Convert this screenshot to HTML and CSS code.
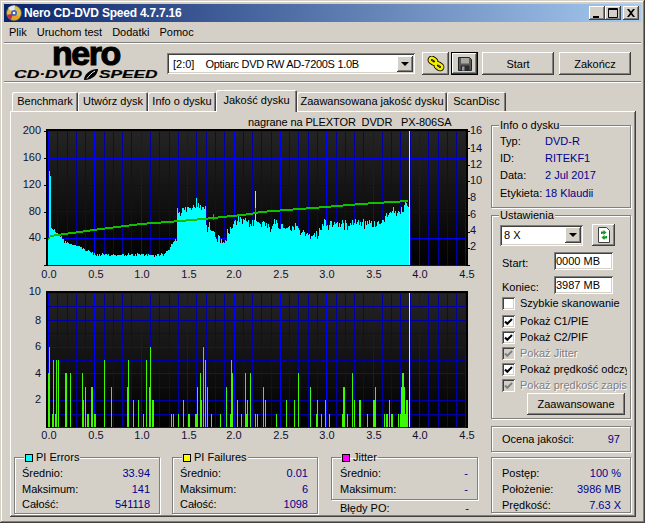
FILE: index.html
```html
<!DOCTYPE html>
<html lang="pl">
<head>
<meta charset="utf-8">
<title>Nero CD-DVD Speed</title>
<link rel="stylesheet" href="styles.css">
</head>
<body>
<div class="window">
  <header class="titlebar">
    <svg class="app-icon" width="16" height="16" viewBox="0 0 16 16">
      <circle cx="8" cy="8" r="7.5" fill="#d8c050" stroke="#5a5a40" stroke-width="0.8"/>
      <path d="M8 8 L2 3 A7.5 7.5 0 0 1 9 .6Z" fill="#e8e8e8"/>
      <path d="M8 8 L14 12 A7.5 7.5 0 0 1 6 15Z" fill="#e8a020"/>
      <path d="M8 8 L1 10 A7.5 7.5 0 0 0 5 14.5Z" fill="#c03040"/>
      <circle cx="8" cy="8" r="3" fill="#4060c0"/>
      <circle cx="8" cy="8" r="1.3" fill="#fff"/>
    </svg>
    <span class="app-title">Nero CD-DVD Speed 4.7.7.16</span>
    <div class="caption-buttons">
      <button class="cap raised"><svg width="16" height="14" viewBox="0 0 16 14"><rect x="4" y="10" width="6" height="2" fill="#000"/></svg></button>
      <button class="cap raised"><svg width="16" height="14" viewBox="0 0 16 14"><path d="M3.500 2.500h9v9h-9zM3 3.500h10" fill="none" stroke="#000"/></svg></button>
      <button class="cap cap-close raised"><svg width="16" height="14" viewBox="0 0 16 14"><path d="M4 3l2 0 2 2.500 2-2.500 2 0-3 4 3 4-2 0-2-2.500-2 2.500-2 0 3-4z" fill="#000"/></svg></button>
    </div>
  </header>

  <nav class="menubar">
    <span>Plik</span><span>Uruchom test</span><span>Dodatki</span><span>Pomoc</span>
  </nav>
  <div class="sep"></div>

  <section class="toolbar">
    <div class="logo">
      <div class="logo-nero">nero</div>
      <div class="logo-sub">
        <span class="logo-wide logo-cd">CD·DVD</span>
        <svg class="logo-leaf" width="16" height="11" viewBox="0 0 16 11">
          <path d="M1 11C1 6 6 0 15 0C15 5 10 11 1 11Z" fill="#000"/>
          <path d="M4 9.500C6 7 8 4 12 2" fill="none" stroke="#fff" stroke-width="1"/>
        </svg>
        <span class="logo-wide logo-speed">SPEED</span>
      </div>
    </div>
    <div class="combo combo-drive sunken">
      <span class="combo-text">[2:0]<span class="drive-name">Optiarc DVD RW AD-7200S 1.0B</span></span>
      <span class="combo-arrow raised"><i class="tri"></i></span>
    </div>
    <button class="btn btn-icon raised" aria-label="Dysk">
      <svg width="18" height="16" viewBox="0 0 18 16">
        <g fill="none" stroke="#000" stroke-width="4.200">
          <rect x="2.500" y="2.500" width="7" height="4.500" rx="2.200" transform="rotate(35 6 4.700)"/>
          <rect x="8.500" y="8" width="7" height="4.500" rx="2.200" transform="rotate(35 12 10.200)"/>
        </g>
        <g fill="none" stroke="#f6ee00" stroke-width="2.400">
          <rect x="2.500" y="2.500" width="7" height="4.500" rx="2.200" transform="rotate(35 6 4.700)"/>
          <rect x="8.500" y="8" width="7" height="4.500" rx="2.200" transform="rotate(35 12 10.200)"/>
        </g>
      </svg>
    </button>
    <div class="btn-default">
      <button class="btn btn-save raised" aria-label="Zapisz">
        <svg width="14" height="14" viewBox="0 0 14 14">
          <path d="M.5.5h11l2 2v11H.5z" fill="#5a5a5a" stroke="#222"/>
          <rect x="3" y="1" width="8" height="5.500" fill="#a8a8a0"/>
          <rect x="2.500" y="8.500" width="9" height="5" fill="#2c2c2c"/>
          <rect x="4" y="9.500" width="2.500" height="4" fill="#999"/>
        </svg>
      </button>
    </div>
    <button class="btn btn-wide btn-start raised">Start</button>
    <button class="btn btn-wide raised">Zakończ</button>
  </section>
  <div class="sep"></div>

  <main class="main">
    <div class="tabs">
      <div class="tab tab-1">Benchmark</div>
      <div class="tab tab-2">Utwórz dysk</div>
      <div class="tab tab-3">Info o dysku</div>
      <div class="tab tab-4 tab-active">Jakość dysku</div>
      <div class="tab tab-5">Zaawansowana jakość dysku</div>
      <div class="tab tab-6">ScanDisc</div>
    </div>

    <div class="panel">
      <div class="left">
        <div class="chart-title">nagrane na PLEXTOR&nbsp;&nbsp;DVDR&nbsp;&nbsp;&nbsp;PX-806SA</div>
        <svg id="chart-top" class="chart chart-a" width="476" height="154" viewBox="14 128 476 154"></svg>
        <svg id="chart-bottom" class="chart chart-b" width="476" height="160" viewBox="14 282 476 160"></svg>

        <div class="stats">
          <fieldset class="group stat">
            <legend><i class="swatch swatch-cyan"></i>PI Errors</legend>
            <div class="stat-grid">
              <span>Średnio:</span><b>33.94</b>
              <span>Maksimum:</span><b>141</b>
              <span>Całość:</span><b>541118</b>
            </div>
          </fieldset>
          <fieldset class="group stat">
            <legend><i class="swatch swatch-yellow"></i>PI Failures</legend>
            <div class="stat-grid">
              <span>Średnio:</span><b>0.01</b>
              <span>Maksimum:</span><b>6</b>
              <span>Całość:</span><b>1098</b>
            </div>
          </fieldset>
          <div class="jitter-col">
            <fieldset class="group stat stat-jitter">
              <legend><i class="swatch swatch-magenta"></i>Jitter</legend>
              <div class="stat-grid">
                <span>Średnio:</span><b>-</b>
                <span>Maksimum:</span><b>-</b>
              </div>
            </fieldset>
            <div class="po-row"><span>Błędy PO:</span><b>-</b></div>
          </div>
        </div>
      </div>

      <aside class="right">
        <fieldset class="group info">
          <legend>Info o dysku</legend>
          <div class="info-grid">
            <span>Typ:</span><b>DVD-R</b>
            <span>ID:</span><b>RITEKF1</b>
            <span>Data:</span><b>2 Jul 2017</b>
            <span>Etykieta:</span><b>18 Klaudii</b>
          </div>
        </fieldset>

        <fieldset class="group settings">
          <legend>Ustawienia</legend>
          <div class="speed-row">
            <div class="combo combo-speed sunken">
              <span class="combo-text">8 X</span>
              <span class="combo-arrow raised"><i class="tri"></i></span>
            </div>
            <button class="btn btn-refresh raised" aria-label="Odśwież">
              <svg width="14" height="16" viewBox="0 0 14 16">
                <path d="M1.500.5h8l3 3v12h-11z" fill="#fff" stroke="#404040"/>
                <path d="M4 7V4.500h2.500V3l3 2.500-3 2.500V6.500H5.500V7z" fill="#0a9a20"/>
                <path d="M10 9v2.500H7.500V13l-3-2.500 3-2.500v1.500h1V9z" fill="#0a9a20"/>
              </svg>
            </button>
          </div>
          <label class="field-row"><span class="field-label">Start:</span><span class="input sunken">0000 MB</span></label>
          <label class="field-row"><span class="field-label">Koniec:</span><span class="input sunken">3987 MB</span></label>
          <div class="checks">
            <div class="check check-first"><i class="box"></i><span>Szybkie skanowanie</span></div>
            <div class="check"><i class="box box-on"><svg width="9" height="9" viewBox="0 0 9 9"><path d="M1 4.500l2.300 2.300L8 2"/></svg></i><span>Pokaż C1/PIE</span></div>
            <div class="check"><i class="box box-on"><svg width="9" height="9" viewBox="0 0 9 9"><path d="M1 4.500l2.300 2.300L8 2"/></svg></i><span>Pokaż C2/PIF</span></div>
            <div class="check check-off"><i class="box box-on"><svg width="9" height="9" viewBox="0 0 9 9"><path d="M1 4.500l2.300 2.300L8 2"/></svg></i><span>Pokaż Jitter</span></div>
            <div class="check"><i class="box box-on"><svg width="9" height="9" viewBox="0 0 9 9"><path d="M1 4.500l2.300 2.300L8 2"/></svg></i><span>Pokaż prędkość odczytu</span></div>
            <div class="check check-off"><i class="box box-on"><svg width="9" height="9" viewBox="0 0 9 9"><path d="M1 4.500l2.300 2.300L8 2"/></svg></i><span>Pokaż prędkość zapisu</span></div>
          </div>
          <button class="btn btn-advanced raised">Zaawansowane</button>
        </fieldset>

        <div class="group quality">
          <span>Ocena jakości:</span><b>97</b>
        </div>

        <div class="group progress">
          <span>Postęp:</span><b>100 %</b>
          <span>Położenie:</span><b>3986 MB</b>
          <span>Prędkość:</span><b>7.63 X</b>
        </div>
      </aside>
    </div>
  </main>
</div>
<script src="charts.js"></script>
</body>
</html>
```

FILE: styles.css
```css
* { box-sizing: border-box; }

html, body {
  margin: 0;
  height: 100%;
  overflow: hidden;
  background: #d4d0c8;
}

body, button {
  font-family: "Liberation Sans", Arial, sans-serif;
  font-size: 11px;
  color: #000;
}

b { font-weight: normal; color: #00008c; text-align: right; }
i { font-style: normal; }

.raised {
  background: #d4d0c8;
  border: 0;
  padding: 0;
  box-shadow: inset -1px -1px 0 #404040, inset 1px 1px 0 #fff, inset -2px -2px 0 #808080, inset 2px 2px 0 #d4d0c8;
}

.sunken {
  background: #fff;
  box-shadow: inset 1px 1px 0 #808080, inset -1px -1px 0 #fff, inset 2px 2px 0 #404040, inset -2px -2px 0 #d4d0c8;
}

.window {
  width: 645px;
  height: 523px;
  padding: 4px;
  background: #d4d0c8;
  box-shadow: inset -1px -1px 0 #404040, inset 1px 1px 0 #d4d0c8, inset -2px -2px 0 #808080, inset 2px 2px 0 #fff;
}

/* title bar */
.titlebar {
  height: 18px;
  display: flex;
  align-items: center;
  background: linear-gradient(90deg, #0a246a, #a6caf0);
}
.app-icon { margin: 0 2px 0 2px; flex: none; }
.app-title { color: #fff; font-weight: bold; font-size: 12px; letter-spacing: -0.23px; }
.caption-buttons { margin-left: auto; margin-right: 2px; display: flex; }
.cap { width: 16px; height: 14px; display: block; }
.cap svg { display: block; }
.cap-close { margin-left: 2px; }

/* menu */
.menubar {
  height: 20px;
  display: flex;
  align-items: center;
  gap: 10px;
  padding-left: 5px;
  font-size: 11px;
}
.sep {
  height: 2px;
  border-top: 1px solid #808080;
  border-bottom: 1px solid #fff;
}

/* toolbar */
.toolbar {
  height: 37px;
  display: flex;
  align-items: flex-start;
}
.logo { width: 163px; flex: none; padding-left: 10px; }
.logo-nero {
  height: 28px;
  margin: -3px 0 0 38px;
  font-size: 34px;
  line-height: 25px;
  font-weight: bold;
  letter-spacing: -1.5px;
  -webkit-text-stroke: 1.1px #000;
}
.logo-sub { display: flex; align-items: center; height: 11px; }
.logo-wide {
  display: block;
  font-size: 11px;
  line-height: 11px;
  font-weight: bold;
  font-style: italic;
  white-space: nowrap;
  transform-origin: left center;
  -webkit-text-stroke: 0.2px #000;
}
.logo-cd { width: 69px; transform: scaleX(1.59); }
.logo-speed { width: 60px; transform: scaleX(1.57); }
.logo-leaf { flex: none; }

.combo {
  display: flex;
  align-items: center;
  padding: 0 2px 0 6px;
  flex: none;
}
.combo-drive { width: 248px; height: 21px; margin-top: 9px; }
.combo-text { flex: 1; white-space: nowrap; }
.drive-name { margin-left: 11px; letter-spacing: -0.3px; }
.combo-arrow {
  width: 16px;
  height: 16px;
  display: flex;
  align-items: center;
  justify-content: center;
  margin-right: 0;
}
.tri {
  width: 0;
  height: 0;
  border: 4px solid transparent;
  border-top-color: #000;
  border-bottom-width: 0;
}

.btn {
  display: flex;
  align-items: center;
  justify-content: center;
  flex: none;
}
.btn-icon { width: 27px; height: 23px; margin: 8px 0 0 7px; }
.btn-default { margin: 8px 0 0 2px; border: 1px solid #000; width: 27px; height: 23px; flex: none; }
.btn-save { width: 25px; height: 21px; }
.btn-wide { width: 72px; height: 23px; margin-top: 8px; margin-left: 5px; }
.btn-start { margin-left: 4px; }

/* tabs */
.main { margin-left: 6px; width: 626px; }
.tabs {
  height: 28px;
  display: flex;
  align-items: flex-end;
  padding-left: 2px;
}
.tab {
  height: 19px;
  line-height: 19px;
  text-align: center;
  white-space: nowrap;
  border-radius: 2px 2px 0 0;
  box-shadow: inset 1px 1px 0 #fff, inset -1px 0 0 #404040, inset -2px 0 0 #808080;
}
.tab-1 { width: 66px; }
.tab-2 { width: 70px; }
.tab-3 { width: 68px; }
.tab-4 { width: 81px; }
.tab-5 { width: 150px; }
.tab-6 { width: 59px; }
.tab-active {
  height: 22px;
  line-height: 20px;
  margin-bottom: -1px;
  position: relative;
  z-index: 1;
  background: #d4d0c8;
}

.panel {
  width: 626px;
  height: 406px;
  padding: 1px;
  display: flex;
  box-shadow: inset -1px -1px 0 #404040, inset 1px 1px 0 #fff, inset -2px -2px 0 #808080;
}

.left { width: 480px; padding-left: 3px; flex: none; }
.chart-title {
  height: 12px;
  margin-top: 4px;
  line-height: 12px;
  padding-left: 234px;
  white-space: nowrap;
  letter-spacing: -0.12px;
}
.chart { display: block; overflow: visible; }
.chart text {
  font-family: "Liberation Sans", Arial, sans-serif;
  font-size: 11px;
  fill: #101030;
  dominant-baseline: central;
}

/* group boxes */
.group {
  margin: 0;
  padding: 0;
  min-width: 0;
  border: 1px solid #808080;
  box-shadow: 1px 1px 0 #fff, inset 1px 1px 0 #fff;
}
.group legend {
  padding: 0 1px;
  margin-left: 7px;
  height: 12px;
  line-height: 12px;
  background: #d4d0c8;
}

/* stats */
.stats { display: flex; margin-top: 9px; }
.stat { width: 146px; height: 63px; margin-right: 12px; flex: none; }
.stat legend { margin-left: 9px; }
.stat-grid {
  display: grid;
  grid-template-columns: 1fr auto;
  grid-template-rows: 16px 15px 15px;
  align-items: center;
  padding: 2px 9px 0 7px;
}
.stat-jitter .stat-grid { padding-left: 8px; }
.swatch {
  display: inline-block;
  width: 8px;
  height: 8px;
  margin-right: 3px;
  vertical-align: -1px;
  border: 1px solid #000;
}
.swatch-cyan { background: #00ffff; }
.swatch-yellow { background: #ffff00; }
.swatch-magenta { background: #ff00ff; }
.jitter-col { width: 147px; margin-left: 1px; }
.stat-jitter { width: 147px; height: 49px; margin: 0; }
.stat-jitter legend { background: transparent; }
.po-row {
  display: flex;
  justify-content: space-between;
  height: 14px;
  line-height: 14px;
  padding: 1px 9px 0 9px;
}

/* right column */
.right { width: 140px; padding-top: 7px; flex: none; }
.info { height: 89px; }
.info-grid {
  display: grid;
  grid-template-columns: 45px 1fr;
  grid-template-rows: 17px 17px 18px 18px;
  align-items: center;
  padding: 1px 0 0 8px;
}
.info-grid b { text-align: left; }

.settings { height: 210px; margin-top: 1px; padding: 0 0 0 8px; }
.settings legend { margin-left: -1px; }
.speed-row { display: flex; align-items: center; gap: 9px; margin-top: 3px; height: 22px; }
.combo-speed { width: 83px; height: 21px; padding-left: 4px; }
.btn-refresh { width: 23px; height: 22px; }
.field-row {
  display: flex;
  align-items: center;
  justify-content: space-between;
  width: 111px;
  height: 18px;
  margin: 6px 0 0 2px;
}
.field-label { padding-top: 4px; }
.input {
  width: 59px;
  height: 18px;
  line-height: 18px;
  padding-left: 2px;
}
.checks { margin: 1px 0 0 2px; }
.check {
  display: flex;
  align-items: center;
  gap: 5px;
  height: 16px;
  width: 125px;
  overflow: hidden;
  white-space: nowrap;
}
.check-first { margin-bottom: 2px; }
.box {
  width: 13px;
  height: 13px;
  flex: none;
  display: flex;
  align-items: center;
  justify-content: center;
  background: #fff;
  box-shadow: inset 1px 1px 0 #808080, inset -1px -1px 0 #fff, inset 2px 2px 0 #404040, inset -2px -2px 0 #d4d0c8;
}
.box svg { display: block; fill: none; stroke: #000; stroke-width: 2; }
.check-off { color: #808080; text-shadow: 1px 1px 0 #fff; }
.check-off .box { background: #d4d0c8; }
.check-off .box svg { stroke: #808080; }
.btn-advanced { width: 98px; height: 22px; margin: 0 0 0 27px; }

.quality {
  height: 26px;
  margin-top: 7px;
  display: flex;
  align-items: center;
  justify-content: space-between;
  padding: 0 10px 0 10px;
}
.progress {
  height: 56px;
  margin-top: 5px;
  display: grid;
  grid-template-columns: 1fr auto;
  grid-template-rows: 16px 16px 16px;
  align-items: center;
  padding: 7px 9px 0 10px;
}
```

FILE: charts.js
```js
(function () {
  var NS = 'http://www.w3.org/2000/svg';

  function el(parent, name, attrs, text) {
    var node = document.createElementNS(NS, name);
    Object.keys(attrs).forEach(function (k) { node.setAttribute(k, attrs[k]); });
    if (text !== undefined) node.textContent = text;
    parent.appendChild(node);
    return node;
  }

  function interp(points, x) {
    for (var i = 1; i < points.length; i++) {
      if (x <= points[i][0]) {
        var a = points[i - 1], b = points[i];
        return a[1] + (b[1] - a[1]) * (x - a[0]) / (b[0] - a[0]);
      }
    }
    return points[points.length - 1][1];
  }

  var seed = 12345;
  function rnd() {
    seed = (seed * 1103515245 + 12345) & 0x7fffffff;
    return seed / 0x7fffffff;
  }

  var LEFT = 48, RIGHT = 466, UNIT = 92.75;

  function frame(svg, id, top, bottom, majorY, stepCount) {
    var defs = el(svg, 'defs', {});
    var grad = el(defs, 'linearGradient', { id: id, x1: 0, y1: 0, x2: 0, y2: 1 });
    el(grad, 'stop', { offset: '0', 'stop-color': '#242424' });
    el(grad, 'stop', { offset: '1', 'stop-color': '#000000' });

    var g = el(svg, 'g', { 'shape-rendering': 'crispEdges' });
    el(g, 'rect', { x: LEFT - 2, y: top - 2, width: RIGHT - LEFT + 4, height: bottom - top + 3, fill: '#000' });
    el(g, 'rect', { x: LEFT, y: top, width: RIGHT - LEFT, height: bottom - top, fill: 'url(#' + id + ')' });

    var i, x, y;
    for (i = 0; i <= 45; i++) {
      x = Math.round(LEFT + i * UNIT / 10);
      var majorX = i % 5 === 0;
      el(g, 'rect', { x: x, y: top, width: 1, height: bottom - top, fill: majorX ? '#0000ff' : '#0000a4' });
    }
    for (i = 0; i <= stepCount; i++) {
      y = Math.round(top + i * (bottom - top) / stepCount);
      var isMajor = majorY.indexOf(i) >= 0;
      el(g, 'rect', { x: LEFT, y: y, width: RIGHT - LEFT, height: 1, fill: isMajor ? '#0000ff' : '#0000a4' });
    }
    return g;
  }

  function xLabels(svg, y) {
    var xs = [49, 96, 142, 189, 234, 281, 327, 374, 420, 467];
    var labels = ['0.0', '0.5', '1.0', '1.5', '2.0', '2.5', '3.0', '3.5', '4.0', '4.5'];
    labels.forEach(function (t, i) {
      el(svg, 'text', { x: xs[i], y: y, 'text-anchor': 'middle' }, t);
    });
  }

  /* ---------- upper chart: PI errors + read speed ---------- */
  var top = document.getElementById('chart-top');
  var gTop = frame(top, 'bg-top', 131, 265, [0, 1, 4, 5], 5);

  var envelope = [
    [51, 228], [56, 232], [60, 235], [64, 241], [68, 243], [75, 245], [80, 247], [85, 250],
    [90, 252], [95, 255], [163, 255], [165, 252], [170, 248], [172, 243], [176, 240], [177, 211],
    [185, 210], [197, 205], [205, 208], [206, 229], [213, 227], [216, 238], [225, 241],
    [231, 228], [238, 220], [250, 224], [255, 222], [270, 225], [298, 227], [300, 232],
    [307, 236], [320, 233], [322, 223], [340, 224], [355, 221], [375, 224], [385, 218],
    [390, 210], [395, 209], [403, 212], [405, 205], [408, 208], [410, 209]
  ];
  var d = 'M48 265V240H49V171H50V176H51V265Z';
  for (var px = 51; px < 410; px++) {
    var amp = px < 177 ? 2.5 : 8;
    var yTop = Math.round(interp(envelope, px) + (rnd() - 0.5) * amp * (rnd() < 0.8 ? 1 : 2));
    d += 'M' + px + ' 265V' + yTop + 'H' + (px + 1) + 'V265Z';
  }
  el(gTop, 'path', { d: d, fill: '#00ffff' });
  el(gTop, 'rect', { x: 255, y: 191, width: 1, height: 30, fill: '#80ffe0' });

  var speed = [[48, 238], [50, 235], [100, 228], [140, 223], [180, 220], [213, 217], [250, 213],
    [260, 211], [325, 206], [360, 203], [407, 200]];
  var line = '';
  for (var sx = 48; sx <= 407; sx++) {
    line += 'M' + sx + ' ' + Math.round(interp(speed, sx)) + 'h1v2h-1z';
  }
  el(gTop, 'path', { d: line, fill: '#10c000' });
  el(gTop, 'rect', { x: 213, y: 214, width: 1, height: 6, fill: '#10c000' });
  el(gTop, 'rect', { x: 255, y: 208, width: 1, height: 6, fill: '#10c000' });
  el(gTop, 'rect', { x: 409, y: 131, width: 1, height: 134, fill: '#e4e4f0' });

  [131, 158, 185, 212, 238, 265].forEach(function (y) {
    el(gTop, 'rect', { x: 44, y: y, width: 2, height: 1, fill: '#000' });
  });
  for (var r = 0; r <= 16; r += 2) {
    el(gTop, 'rect', { x: 468, y: Math.round(265 - r * 8.375), width: 2, height: 1, fill: '#000' });
  }

  [['200', 130], ['160', 157], ['120', 184], ['80', 211], ['40', 237]].forEach(function (p) {
    el(top, 'text', { x: 41, y: p[1], 'text-anchor': 'end' }, p[0]);
  });
  [['16', 130], ['14', 148], ['12', 164], ['10', 180], ['8', 197], ['6', 214], ['4', 230], ['2', 246]].forEach(function (p) {
    el(top, 'text', { x: 470, y: p[1] }, p[0]);
  });
  xLabels(top, 274);

  /* ---------- lower chart: PI failures ---------- */
  var bottom = document.getElementById('chart-bottom');
  var gBottom = frame(bottom, 'bg-bottom', 293, 427, [0, 4, 6, 10], 10);

  var bars = [
    [48, 2, 4], [49, 1, 6], [52, 2, 1], [53, 1, 5], [55, 1, 1], [56, 1, 5], [58, 1, 5],
    [65, 2, 4], [70, 1, 4], [82, 1, 4], [82, 2, 2], [85, 1, 3], [87, 2, 1], [91, 2, 3],
    [94, 2, 1], [104, 1, 5], [111, 1, 3], [127, 2, 3], [128, 1, 5], [133, 1, 2], [138, 1, 2],
    [143, 1, 1], [146, 1, 5], [149, 2, 3], [150, 1, 6], [152, 2, 2], [171, 1, 1], [173, 1, 1],
    [178, 1, 1], [183, 1, 2], [188, 2, 1], [195, 2, 1], [197, 1, 3], [200, 1, 4], [201, 1, 2],
    [203, 1, 6], [205, 1, 5], [207, 1, 3], [211, 1, 1], [220, 1, 1], [226, 1, 3], [230, 2, 1],
    [231, 1, 5], [232, 1, 4], [237, 1, 2], [241, 1, 1], [245, 2, 1], [245, 1, 4], [247, 1, 2],
    [250, 1, 4], [255, 1, 1], [257, 1, 1], [263, 1, 3], [265, 1, 2], [276, 1, 1], [286, 1, 2],
    [294, 1, 2], [298, 1, 4], [310, 1, 3], [316, 2, 1], [317, 1, 2], [321, 1, 1], [325, 1, 2],
    [329, 1, 1], [342, 2, 1], [343, 2, 3], [347, 1, 1], [352, 1, 4], [354, 1, 2], [359, 2, 2],
    [367, 1, 1], [373, 2, 2], [375, 1, 3], [384, 1, 1], [386, 2, 1], [389, 1, 2], [391, 2, 1],
    [398, 1, 1], [400, 7, 1], [401, 4, 3], [402, 2, 4], [406, 2, 2], [409, 1, 1]
  ];
  bars.forEach(function (b) {
    var h = Math.round(b[2] * 13.4);
    el(gBottom, 'rect', { x: b[0], y: 427 - h, width: b[1], height: h, fill: '#3cf800' });
  });
  el(gBottom, 'rect', { x: 409, y: 293, width: 1, height: 134, fill: '#e4e4f0' });

  [['10', 291], ['8', 320], ['6', 346], ['4', 373], ['2', 399]].forEach(function (p) {
    el(bottom, 'text', { x: 41, y: p[1], 'text-anchor': 'end' }, p[0]);
  });
  xLabels(bottom, 435);
})();
```
